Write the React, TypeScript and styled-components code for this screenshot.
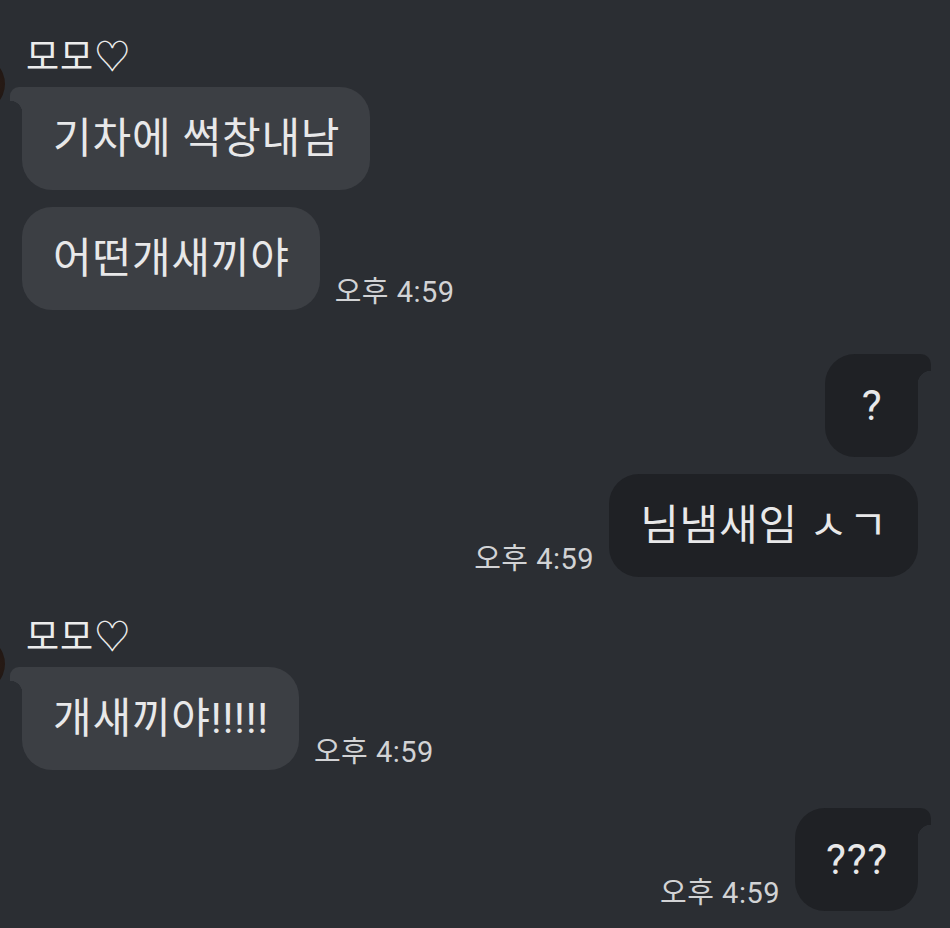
import React from "react";
import styled, { createGlobalStyle, css } from "styled-components";

const GlobalStyle = createGlobalStyle`
  html, body {
    margin: 0;
    padding: 0;
    background: #2b2e33;
    overflow: hidden;
  }
  body {
    font-family: Roboto, "Noto Sans CJK KR", sans-serif;
    color: #e6e6e7;
  }
`;

const RECEIVED_BG = "#3c3f44";
const SENT_BG = "#1f2125";

const Page = styled.div`
  width: 950px;
  height: 928px;
  box-sizing: border-box;
  padding: 34px 32px 0 0;
  display: flex;
  flex-direction: column;
`;

const ReceivedGroup = styled.div<{ top?: number }>`
  display: flex;
  gap: 17px;
  margin-top: ${({ top }) => top ?? 0}px;
`;

const Avatar = styled.div`
  flex: none;
  width: 56px;
  height: 56px;
  margin-left: -51px;
  margin-top: 22px;
  border-radius: 50%;
  background: radial-gradient(circle at 80% 50%, #2a1b15 0%, #161312 70%);
`;

const Column = styled.div<{ align: "start" | "end" }>`
  display: flex;
  flex-direction: column;
  gap: 17px;
  flex: 1;
  align-items: ${({ align }) => (align === "end" ? "flex-end" : "flex-start")};
`;

const SentGroup = styled(Column)<{ top: number }>`
  margin-top: ${({ top }) => top}px;
`;

const Name = styled.div`
  font-family: "Noto Sans CJK KR", sans-serif;
  font-size: 36px;
  line-height: 40px;
  letter-spacing: 1px;
  padding-left: 4px;
  margin-bottom: -4px;
  color: #ececec;
`;

const Row = styled.div<{ mine?: boolean }>`
  display: flex;
  align-items: flex-end;
  gap: 15px;
  flex-direction: ${({ mine }) => (mine ? "row-reverse" : "row")};
`;

const Bubble = styled.div<{ mine?: boolean; tail?: boolean }>`
  position: relative;
  box-sizing: border-box;
  min-width: 93px;
  padding: 26px 30px 26px 31px;
  font-size: 42px;
  line-height: 51px;
  letter-spacing: 0.8px;
  text-align: center;
  white-space: nowrap;
  border-radius: 30px;
  background: ${({ mine }) => (mine ? SENT_BG : RECEIVED_BG)};
  color: #e8e8e9;

  ${({ tail, mine }) =>
    tail &&
    !mine &&
    css`
      border-top-left-radius: 0;
      &::before {
        content: "";
        position: absolute;
        left: -12px;
        top: 0;
        width: 12px;
        height: 26px;
        border-top-left-radius: 9px;
        background: radial-gradient(
          circle at 0 100%,
          transparent 12px,
          ${RECEIVED_BG} 12.5px
        );
      }
    `}

  ${({ tail, mine }) =>
    tail &&
    mine &&
    css`
      border-top-right-radius: 0;
      &::before {
        content: "";
        position: absolute;
        right: -13px;
        top: 0;
        width: 13px;
        height: 30px;
        border-top-right-radius: 10px;
        background: radial-gradient(
          circle at 100% 100%,
          transparent 13px,
          ${SENT_BG} 13.5px
        );
      }
    `}
`;

const Time = styled.span`
  font-size: 29px;
  line-height: 34px;
  letter-spacing: 0.5px;
  color: #d2d3d5;
  white-space: nowrap;
  margin-bottom: 1px;
`;

type Msg = { text: string; time?: string };

const Received = ({ name, msgs, top }: { name: string; msgs: Msg[]; top?: number }) => (
  <ReceivedGroup top={top}>
    <Avatar />
    <Column align="start">
      <Name>{name}</Name>
      {msgs.map((m, i) => (
        <Row key={i}>
          <Bubble tail={i === 0}>{m.text}</Bubble>
          {m.time && <Time>{m.time}</Time>}
        </Row>
      ))}
    </Column>
  </ReceivedGroup>
);

const Sent = ({ msgs, top }: { msgs: Msg[]; top: number }) => (
  <SentGroup align="end" top={top}>
    {msgs.map((m, i) => (
      <Row key={i} mine>
        <Bubble mine tail={i === 0}>
          {m.text}
        </Bubble>
        {m.time && <Time>{m.time}</Time>}
      </Row>
    ))}
  </SentGroup>
);

export default function App() {
  return (
    <>
      <GlobalStyle />
      <Page>
        <Received
          name="모모♡"
          msgs={[
            { text: "기차에 썩창내남" },
            { text: "어떤개새끼야", time: "오후 4:59" },
          ]}
        />
        <Sent
          top={44}
          msgs={[{ text: "?" }, { text: "님냄새임 ㅅㄱ", time: "오후 4:59" }]}
        />
        <Received
          top={37}
          name="모모♡"
          msgs={[{ text: "개새끼야!!!!!", time: "오후 4:59" }]}
        />
        <Sent top={38} msgs={[{ text: "???", time: "오후 4:59" }]} />
      </Page>
    </>
  );
}
